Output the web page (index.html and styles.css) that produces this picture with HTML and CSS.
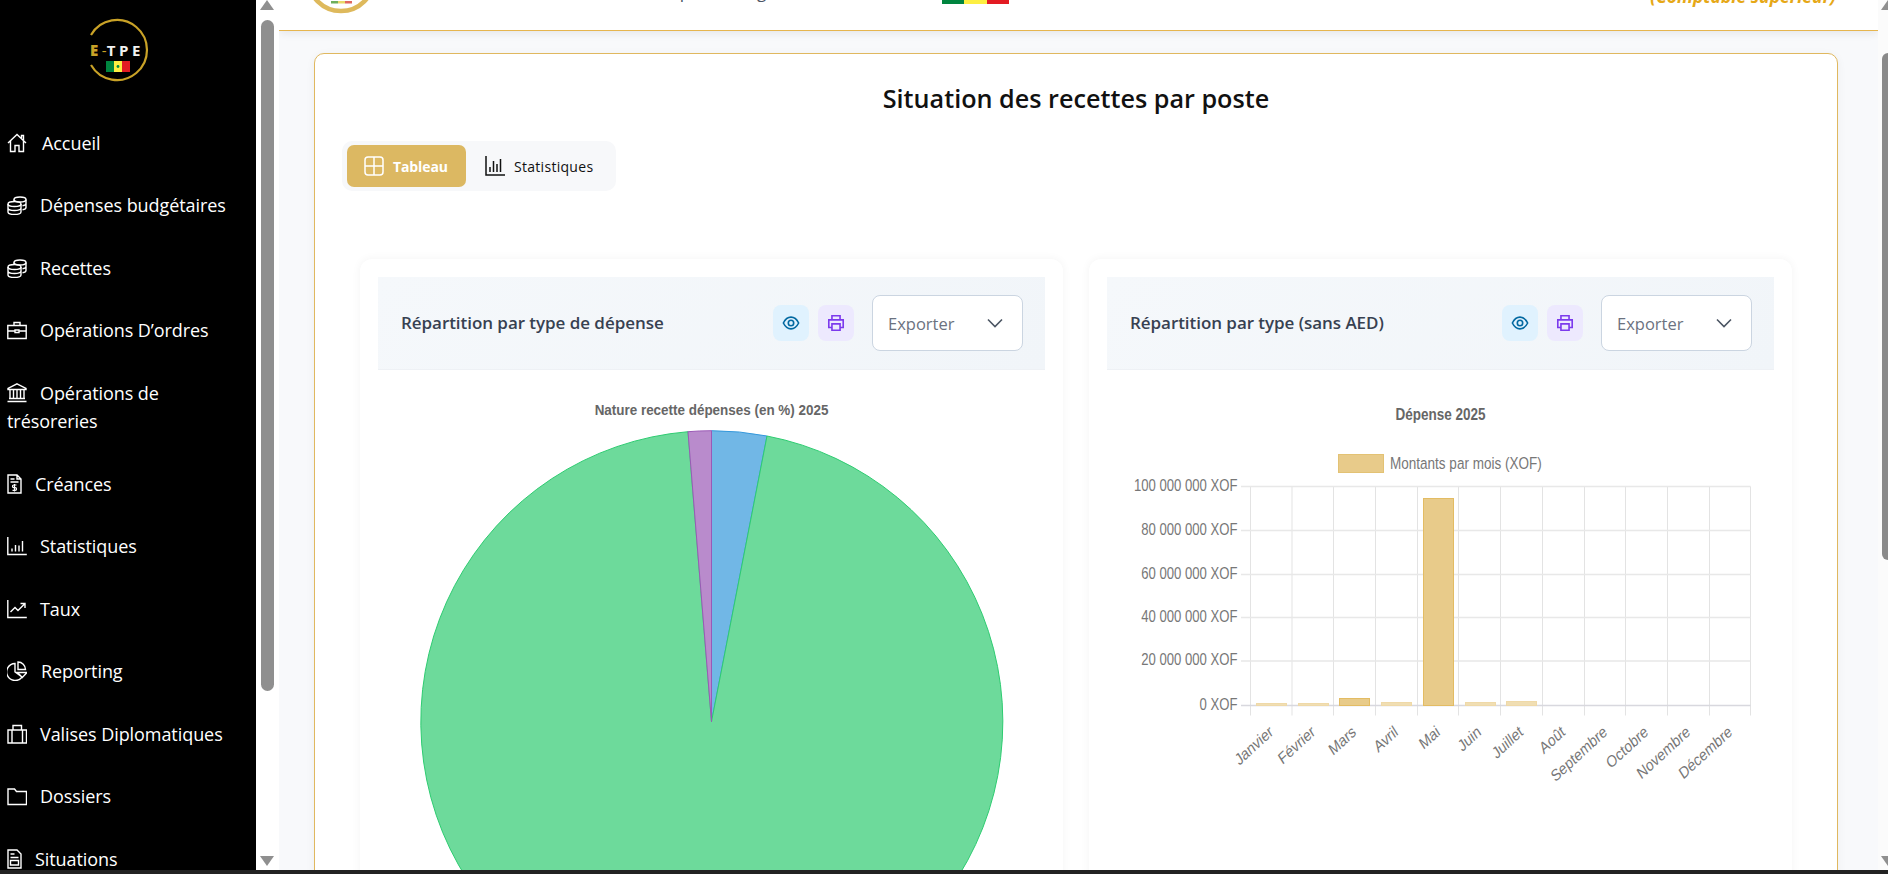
FILE: index.html
```html
<!DOCTYPE html>
<html lang="fr">
<head>
<meta charset="utf-8">
<title>Situation des recettes par poste</title>
<link rel="stylesheet" href="styles.css">
</head>
<body>
<div class="app">
  <aside class="sidebar">
    <div class="logo">
      <svg width="64" height="64" viewBox="0 0 64 64">
        <path d="M6 17A30 30 0 1 1 6 47" fill="none" stroke="#c9a227" stroke-width="2.2"/>
        <rect x="21" y="43" width="8" height="11" fill="#00853f"/>
        <rect x="29" y="43" width="8" height="11" fill="#fdef42"/>
        <rect x="37" y="43" width="8" height="11" fill="#e31b23"/>
        <circle cx="33" cy="48.5" r="1.400" fill="#00853f"/>
      </svg>
      <span class="logo-text"><b>E</b><i>-</i>TPE</span>
    </div>
    <nav class="nav">
      <a class="nav-item gap-15"><svg class="ic" viewBox="0 0 20 20"><path d="M1 10 10 1.500 19 10M3.500 8v10.500h4.500v-6h4v6h4.500V8M14.500 5V2.500h2V7"/></svg>Accueil</a>
      <a class="nav-item gap-13"><svg class="ic" viewBox="0 0 20 20"><ellipse cx="13" cy="4.500" rx="6" ry="2.500"/><path d="M7 4.500v2.500M19 4.500v8c0 1-1.500 2-3.500 2.300M19 8.500c0 1-1.500 2-3.500 2.300"/><ellipse cx="7.500" cy="9" rx="6.500" ry="2.500"/><path d="M1 9v8c0 1.500 3 2.500 6.500 2.500S14 18.500 14 17V9M1 13c0 1.500 3 2.500 6.500 2.500S14 14.500 14 13"/></svg>Dépenses budgétaires</a>
      <a class="nav-item gap-13"><svg class="ic" viewBox="0 0 20 20"><ellipse cx="13" cy="4.500" rx="6" ry="2.500"/><path d="M7 4.500v2.500M19 4.500v8c0 1-1.500 2-3.500 2.300M19 8.500c0 1-1.500 2-3.500 2.300"/><ellipse cx="7.500" cy="9" rx="6.500" ry="2.500"/><path d="M1 9v8c0 1.500 3 2.500 6.500 2.500S14 18.500 14 17V9M1 13c0 1.500 3 2.500 6.500 2.500S14 14.500 14 13"/></svg>Recettes</a>
      <a class="nav-item gap-13"><svg class="ic" viewBox="0 0 20 20"><path d="M.8 5.500h18.400v13H.8zM7 5.500V2.500h6v3M.8 11h6.700M12.500 11h6.700M8 10h4v2.500H8z"/></svg>Opérations D’ordres</a>
      <a class="nav-item gap-13 wrap"><svg class="ic" viewBox="0 0 20 20"><path d="M10 .8 19 5.500v1H1v-1zM3 6.500v9M6.500 6.500v9M10 6.500v9M13.500 6.500v9M17 6.500v9M2 15.500h16M.5 18.500h19"/></svg>Opérations de trésoreries</a>
      <a class="nav-item gap-13"><svg class="ic-n" viewBox="0 0 15 20"><path d="M1 1h9l4 4v14H1zM10 1v4h4M3.500 5h4M3.500 8h8"/><path class="fine" d="M9.500 11H6.800a1.300 1.300 0 0 0 0 2.700h1.400a1.300 1.300 0 0 1 0 2.700H5.500M7.500 10v7.500"/></svg>Créances</a>
      <a class="nav-item gap-13"><svg class="ic" viewBox="0 0 20 20"><path d="M.8 1v17.500h19M5 15.500v-3M8.500 15.500V9M12 15.500v-6M15.500 15.500V5"/></svg>Statistiques</a>
      <a class="nav-item gap-13"><svg class="ic" viewBox="0 0 20 20"><path d="M.8 1v17.500h19M3.500 13l4.500-4.500 3 3L17.500 5M13.500 4.500h4.500V9"/></svg>Taux</a>
      <a class="nav-item gap-14"><svg class="ic" viewBox="0 0 20 20"><path d="M8 2.500a8.500 8.500 0 1 0 7 13.500L8 11zM11 1c4 0 7.500 3.500 7.500 7.500H11zM10.500 11.500H20l-4.700 5z"/></svg>Reporting</a>
      <a class="nav-item gap-13"><svg class="ic" viewBox="0 0 20 20"><path d="M1 6h18.500v13H1zM6 1.500h8.500V6H6zM5 6v13M15.500 6v13"/></svg>Valises Diplomatiques</a>
      <a class="nav-item gap-13"><svg class="ic" viewBox="0 0 20 20"><path d="M1 3h6.500l2 2.500h10v13H1z"/></svg>Dossiers</a>
      <a class="nav-item gap-13"><svg class="ic-n" viewBox="0 0 15 20"><path d="M1 1h9l4 4v14H1zM3.500 5h4M3.500 8.500h8M3.500 11.500h8v4.500h-8z"/></svg>Situations</a>
    </nav>
  </aside>
  <div class="rail">
    <span class="arrow-up"></span>
    <span class="rail-thumb"></span>
    <span class="arrow-down"></span>
  </div>
  <main class="main">
    <header class="topbar">
      <svg class="seal" width="60" height="14" viewBox="0 0 60 14"><circle cx="30" cy="-22" r="33" fill="#fff" stroke="#deb95c" stroke-width="4.500"/><rect x="20" y="1" width="7" height="2.500" fill="#6fae5a"/><rect x="27" y="1" width="7" height="2.500" fill="#e9d96a"/><rect x="34" y="1" width="7" height="2.500" fill="#e0675f"/></svg>
      <div class="topbar-title"><span>Comptes Sénégal</span></div>
      <div class="top-flag"><i class="fg"></i><i class="fy"></i><i class="fr"></i></div>
      <div class="top-role">(Comptable supérieur)</div>
    </header>
    <section class="content">
      <div class="panel">
        <h1 class="panel-title">Situation des recettes par poste</h1>
        <div class="tabs">
          <button class="tab active"><svg class="tab-ic" viewBox="0 0 20 20"><rect x="1" y="1" width="18" height="18" rx="3"/><path d="M10 1v18M1 10h18"/></svg>Tableau</button>
          <button class="tab"><svg class="tab-ic" viewBox="0 0 20 20"><path d="M1 0v19h19M5 16v-5M8.500 16V5M12 16V8M15.500 16V3"/></svg>Statistiques</button>
        </div>
        <div class="grid">
          <article class="card">
            <div class="card-head">
              <h2 class="card-title">Répartition par type de dépense</h2>
              <button class="icon-btn view"><svg class="btn-ic" viewBox="0 0 20 20"><path d="M1.500 10C4 5 7 3.500 10 3.500S16 5 18.500 10C16 15 13 16.500 10 16.500S4 15 1.500 10z"/><circle cx="10" cy="10" r="3"/></svg></button>
              <button class="icon-btn print"><svg class="btn-ic" viewBox="0 0 20 20"><path d="M5.500 6V2h9v4M5.500 15H2V6.500h16V15h-3.500M5.500 11h9v7h-9z"/></svg></button>
              <div class="select">Exporter<svg class="chev" viewBox="0 0 16 10"><path d="M1 1.500 8 8.500 15 1.500"/></svg></div>
            </div>
            <svg class="pie" width="666" height="520" viewBox="0 0 666 520">
              <text class="chart-title-s" transform="translate(333.500 44.500) scale(.96 1)" text-anchor="middle">Nature recette dépenses (en %) 2025</text>
              <path d="M333.500 351.700V60.700A291 291 0 0 1 389 66z" fill="#71b7e6" stroke="#3498db"/>
              <path d="M333.500 351.700 389 66A291 291 0 1 1 310 61.700z" fill="#6dda9b" stroke="#2ecc71"/>
              <path d="M333.500 351.700 310 61.700A291 291 0 0 1 333.500 60.700z" fill="#b98bcc" stroke="#9b59b6"/>
            </svg>
          </article>
          <article class="card">
            <div class="card-head">
              <h2 class="card-title">Répartition par type (sans AED)</h2>
              <button class="icon-btn view"><svg class="btn-ic" viewBox="0 0 20 20"><path d="M1.500 10C4 5 7 3.500 10 3.500S16 5 18.500 10C16 15 13 16.500 10 16.500S4 15 1.500 10z"/><circle cx="10" cy="10" r="3"/></svg></button>
              <button class="icon-btn print"><svg class="btn-ic" viewBox="0 0 20 20"><path d="M5.500 6V2h9v4M5.500 15H2V6.500h16V15h-3.500M5.500 11h9v7h-9z"/></svg></button>
              <div class="select">Exporter<svg class="chev" viewBox="0 0 16 10"><path d="M1 1.500 8 8.500 15 1.500"/></svg></div>
            </div>
            <svg class="bars" width="666" height="520" viewBox="1107 370 666 520">
              <text class="chart-title-b" transform="translate(1440.500 420) scale(.82 1)" text-anchor="middle">Dépense 2025</text>
              <rect x="1338.500" y="454.500" width="45" height="18" fill="#e8cb8a" stroke="#e3c274"/>
              <text class="tick" transform="translate(1390 468.500) scale(.82 1)">Montants par mois (XOF)</text>
              <g class="grid-v">
                <path d="M1250.500 486.500V715.500M1292 486.500V715.500M1333.500 486.500V715.500M1375.500 486.500V715.500M1417.500 486.500V715.500M1458.500 486.500V715.500M1500.500 486.500V715.500M1542.500 486.500V715.500M1584.500 486.500V715.500M1625.500 486.500V715.500M1667.500 486.500V715.500M1709.500 486.500V715.500M1750.500 486.500V715.500"/>
              </g>
              <g class="grid-h">
                <path d="M1241 486.500H1750.500M1241 530.500H1750.500M1241 574.500H1750.500M1241 617.500H1750.500M1241 661H1750.500"/>
              </g>
              <path class="axis" d="M1241 705.500H1750.500"/>
              <g class="bar">
                <rect x="1423.500" y="498.500" width="30" height="207"/>
                <rect x="1339.500" y="698.500" width="30" height="7"/>
              </g>
              <g class="bar-light">
                <rect x="1256.500" y="703.500" width="30" height="2"/>
                <rect x="1298.500" y="703.500" width="30" height="2"/>
                <rect x="1381.500" y="702.500" width="30" height="3"/>
                <rect x="1465.500" y="702.500" width="30" height="3"/>
                <rect x="1506.500" y="701.500" width="30" height="4"/>
              </g>
              <g class="tick-y" text-anchor="end" transform="translate(1237.500 0) scale(.82 1)">
                <text y="491.500">100 000 000 XOF</text>
                <text y="535">80 000 000 XOF</text>
                <text y="579">60 000 000 XOF</text>
                <text y="622">40 000 000 XOF</text>
                <text y="665.500">20 000 000 XOF</text>
                <text y="710">0 XOF</text>
              </g>
              <g class="tick-x" text-anchor="end">
                <text transform="translate(1274 734) scale(.82 1) rotate(-37)">Janvier</text>
                <text transform="translate(1316 734) scale(.82 1) rotate(-37)">Février</text>
                <text transform="translate(1357 734) scale(.82 1) rotate(-37)">Mars</text>
                <text transform="translate(1399 734) scale(.82 1) rotate(-37)">Avril</text>
                <text transform="translate(1441 734) scale(.82 1) rotate(-37)">Mai</text>
                <text transform="translate(1482 734) scale(.82 1) rotate(-37)">Juin</text>
                <text transform="translate(1524 734) scale(.82 1) rotate(-37)">Juillet</text>
                <text transform="translate(1566 734) scale(.82 1) rotate(-37)">Août</text>
                <text transform="translate(1608 734) scale(.82 1) rotate(-37)">Septembre</text>
                <text transform="translate(1649 734) scale(.82 1) rotate(-37)">Octobre</text>
                <text transform="translate(1691 734) scale(.82 1) rotate(-37)">Novembre</text>
                <text transform="translate(1733 734) scale(.82 1) rotate(-37)">Décembre</text>
              </g>
            </svg>
          </article>
        </div>
      </div>
    </section>
  </main>
  <div class="page-scroll">
    <span class="arrow-up small"></span>
    <span class="page-thumb"></span>
    <span class="arrow-down small"></span>
  </div>
</div>
<div class="taskbar"></div>
</body>
</html>
```
FILE: styles.css
```css
* { box-sizing: border-box; }
html, body { margin: 0; height: 874px; overflow: hidden; background: #fff; }
body { font-family: "Open Sans", "Noto Sans", "Liberation Sans", sans-serif; color: #111; }
.app { display: flex; height: 870px; overflow: hidden; }
.taskbar { height: 4px; background: #222; }

/* sidebar */
.sidebar { width: 256px; flex: none; background: #000; color: #fff; overflow: hidden; }
.logo { position: relative; width: 64px; height: 64px; margin: 18px 0 0 85px; }
.logo svg { display: block; }
.logo-text { position: absolute; left: 5px; top: 22px; width: 56px; font: 700 15px/20px "Open Sans", sans-serif; letter-spacing: 3.600px; color: #f2f2f2; white-space: nowrap; }
.logo-text b { color: #c9a227; }
.logo-text i { font-style: normal; font-weight: 400; letter-spacing: 0; color: #c9a227; }
.nav { display: flex; flex-direction: column; padding-top: 29.500px; }
.nav-item { display: block; padding: 17px 7px; font-size: 18px; line-height: 28.500px; color: #fff; letter-spacing: -.07px; }
.ic, .ic-n { display: inline-block; vertical-align: -3px; fill: none; stroke: #fff; stroke-width: 1.400; }
.ic { width: 20px; height: 20px; }
.ic-n { width: 15px; height: 20px; }
.fine { stroke-width: 1.200; }
.gap-15 .ic { margin-right: 15px; }
.gap-14 .ic { margin-right: 14px; }
.gap-13 .ic { margin-right: 13px; }
.gap-13 .ic-n { margin-right: 13px; }
.wrap { padding-right: 60px; }

/* window scrollbars */
.rail { position: relative; width: 23px; flex: none; background: #fff; }
.rail-thumb { position: absolute; left: 5px; top: 20px; width: 13px; height: 671px; border-radius: 7px; background: #8f8f8f; }
.arrow-up, .arrow-down { position: absolute; left: 4px; width: 0; height: 0; border-left: 7.500px solid transparent; border-right: 7.500px solid transparent; }
.arrow-up { top: 0; border-bottom: 10px solid #8f8f8f; }
.arrow-down { bottom: 4px; border-top: 10px solid #8f8f8f; }
.page-scroll { position: relative; width: 10px; flex: none; background: #fbfbfb; overflow: hidden; }
.page-thumb { position: absolute; left: 4px; top: 53px; width: 6px; height: 507px; border-radius: 6px 0 0 6px; background: #8a8a8a; }
.arrow-up.small { left: 3px; border-left-width: 7px; border-right-width: 7px; }
.arrow-down.small { left: 3px; border-left-width: 7px; border-right-width: 7px; }

/* main */
.main { flex: 1; min-width: 0; background: #f8f9fb; overflow: hidden; display: flex; flex-direction: column; }
.topbar { position: relative; height: 31px; flex: none; display: flex; align-items: flex-start; background: #fff; border-bottom: 1px solid #e6b54e; box-shadow: 0 3px 8px rgba(0, 0, 0, .07); }
.seal { margin-left: 32px; flex: none; }
.topbar-title { margin-left: 272px; width: 200px; height: 4px; overflow: hidden; }
.topbar-title span { display: block; margin-top: -19px; font-size: 17px; line-height: 22px; color: #4b5563; white-space: nowrap; }
.top-flag { position: absolute; left: 663px; top: 0; display: flex; height: 4px; }
.top-flag i { width: 22.300px; }
.fg { background: #00853f; }
.fy { background: #fdef42; }
.fr { background: #e31b23; }
.top-role { position: absolute; right: 42px; top: -15px; font-size: 17.500px; line-height: 22px; font-weight: 700; font-style: italic; color: #e6a817; white-space: nowrap; }

.content { flex: 1; padding: 22px 40px 0 35px; overflow: hidden; }
.panel { height: 900px; background: #fff; border: 1px solid #e0b85f; border-radius: 10px; padding: 0 26px; box-shadow: 0 2px 10px rgba(0, 0, 0, .05); }
.panel-title { margin: 26px 0 0; text-align: center; font-size: 25.200px; line-height: 36px; font-weight: 600; color: #111; }
.tabs { display: inline-flex; margin: 25px 0 0 1px; padding: 4px 5px; height: 50px; background: #f7f8fa; border-radius: 10px; }
.tab { display: flex; align-items: center; gap: 9px; height: 42px; padding: 0 18px 0 19px; border: 0; border-radius: 7px; background: none; font: 400 14px "Open Sans", sans-serif; letter-spacing: .3px; color: #111; }
.tab.active { padding: 0 18px 0 17px; background: #dcb862; color: #fff; font-weight: 700; letter-spacing: -.1px; }
.tab-ic { width: 20px; height: 20px; fill: none; stroke: currentColor; stroke-width: 1.500; }
.grid { display: grid; grid-template-columns: 703px 703px; gap: 26px; margin: 68px 0 0 19px; }
.card { height: 700px; padding: 18px; background: #fff; border-radius: 12px; box-shadow: 0 0 10px rgba(0, 0, 0, .05); }
.card-head { display: flex; align-items: center; height: 93px; padding: 0 22px 0 23px; background: linear-gradient(135deg, #f5f8fb, #f1f5f9); border-bottom: 1px solid #eef1f5; }
.card-title { flex: 1; margin: 0; font-size: 17px; line-height: 24px; font-weight: 600; color: #374151; letter-spacing: -.05px; }
.icon-btn { display: flex; align-items: center; justify-content: center; width: 36px; height: 36px; margin-right: 9px; padding: 0; border: 0; border-radius: 8px; }
.icon-btn.print { margin-right: 18px; }
.view { background: #e0f2fe; color: #0369a1; }
.print { background: #ede9fe; color: #7c3aed; }
.btn-ic { width: 18px; height: 18px; fill: none; stroke: currentColor; stroke-width: 1.800; }
.select { display: flex; align-items: center; justify-content: space-between; width: 151px; height: 56px; padding: 0 19px 0 15px; background: #fff; border: 1px solid #cbd5e1; border-radius: 8px; font-size: 16.500px; color: #6b7280; }
.chev { width: 16px; height: 10px; fill: none; stroke: #4b5563; stroke-width: 1.600; }
.pie, .bars { display: block; }
.chart-title-s { font: 700 14px "Liberation Sans", sans-serif; fill: #666; }
.chart-title-b { font: 700 16.500px "Liberation Sans", sans-serif; fill: #666; }
.tick { font: 16.500px "Liberation Sans", sans-serif; fill: #777; }
.tick-y { font: 16px "Liberation Sans", sans-serif; fill: #777; }
.tick-x { font: 16.500px "Liberation Sans", sans-serif; fill: #777; }
.grid-v path { fill: none; stroke: #e3e3e3; stroke-width: 1; }
.grid-h path { fill: none; stroke: #e8e8e8; stroke-width: 1.500; }
.axis { fill: none; stroke: #d8d8de; stroke-width: 1.500; }
.bar rect { fill: #e8cb8a; stroke: #e3bc63; }
.bar-light rect { fill: #f0deb3; stroke: #efd9a8; }
```
